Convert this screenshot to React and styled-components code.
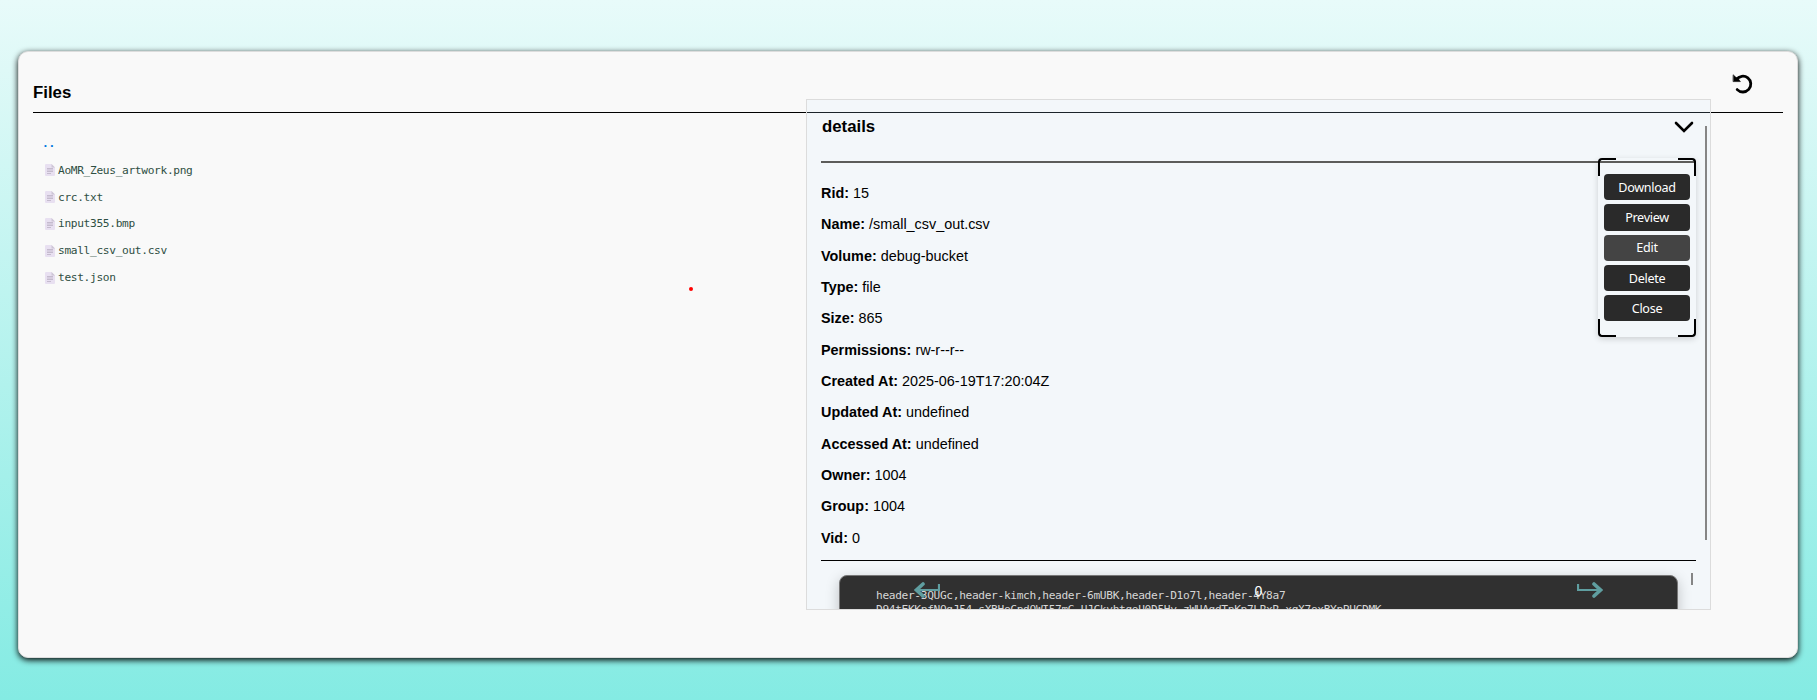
import React from "react";
import styled, { createGlobalStyle } from "styled-components";

const Global = createGlobalStyle`
  * { box-sizing: border-box; }
  body { margin: 0; overflow: hidden; }
`;

const mono = `"DejaVu Sans Mono", monospace`;

const Page = styled.main`
  height: 700px;
  padding: 51px 19px 42px 18px;
  background: linear-gradient(180deg, #e8fbfa 0%, #def9f7 10%, #84ebe3 100%);
  font-family: "Liberation Sans", Arial, sans-serif;
  color: #000;
`;

const Card = styled.section`
  position: relative;
  height: 607px;
  padding: 0 14px;
  border: 1px solid #ddd;
  border-radius: 10px;
  background: #f9f9f9;
  box-shadow: 0 2px 6px #000;
`;

const Header = styled.header`
  display: flex;
  justify-content: space-between;
  height: 61px;
  border-bottom: 1px solid #000;
`;

const Title = styled.h1`
  margin: 31px 0 0;
  font-size: 16.8px;
  line-height: 20px;
`;

const Refresh = styled.svg`
  width: 22px;
  height: 22px;
  margin: 21px 29px 0 0;
`;

const FileList = styled.ul`
  margin: 0;
  padding: 18px 0 0 12px;
  list-style: none;
  font: 11.2px ${mono};
  letter-spacing: -0.33px;
`;

const FileRow = styled.li`
  display: flex;
  align-items: center;
  height: 26.8px;
  color: #2f4f43;
  gap: 3px;
`;

const Parent = styled(FileRow)`
  height: 24px;
  margin: 0 0 2px -3px;
  color: #0078e0;
  font-weight: bold;
`;

const Panel = styled.aside`
  position: absolute;
  left: 787px;
  top: 47px;
  width: 905px;
  height: 511px;
  padding: 0 14px;
  overflow: hidden;
  border: 1px solid #dcdcdc;
  background: #f3f7fa;
`;

const BackRule = styled.i`
  display: block;
  height: 1px;
  margin: 12px -14px 0;
  background: #1b242a;
`;

const PanelHead = styled.div`
  display: flex;
  justify-content: space-between;
  height: 50px;
  border-bottom: 2px solid #5c5c5a;
`;

const PanelTitle = styled.h2`
  margin: 4px 0 0 1px;
  font-size: 16.8px;
  line-height: 20px;
`;

const Chevron = styled.svg`
  width: 20px;
  height: 12px;
  margin: 8px 2px 0 0;
`;

const Details = styled.div`
  height: 398px;
  padding-top: 15px;
  border-bottom: 1px solid #000;
`;

const Field = styled.p`
  margin: 0;
  height: 31.33px;
  font-size: 14.4px;
  line-height: 31px;
`;

const Preview = styled.pre`
  height: 100px;
  margin: 14px 18px 0;
  padding: 13px 36px;
  border: 1px solid #777;
  border-radius: 8px;
  background: #303030;
  box-shadow: 0 4px 14px rgba(0, 0, 0, 0.22);
  color: #d6d6d6;
  font: 11.2px/14px ${mono};
  letter-spacing: -0.34px;
`;

const Pager = styled.nav`
  position: absolute;
  left: 107px;
  right: 107px;
  top: 482px;
  display: flex;
  justify-content: space-between;
  color: #fff;
  font-size: 14px;
`;

const PageNumber = styled.span`
  padding-top: 1px;
`;

const Arrow = styled.svg`
  width: 26px;
  height: 16px;
`;

const Scroll = styled.i`
  position: absolute;
  right: ${(p) => p.$right}px;
  top: ${(p) => p.$top}px;
  width: 2px;
  height: ${(p) => p.$height}px;
  background: #858585;
`;

const Menu = styled.div`
  position: absolute;
  right: 14px;
  top: 58px;
  width: 98px;
  height: 179px;
  display: flex;
  flex-direction: column;
  gap: 4px;
  padding: 16px 6px;
  border-radius: 4px;
  box-shadow: 0 2px 6px rgba(0, 0, 0, 0.16);
`;

const Corner = styled.i`
  position: absolute;
  ${(p) => p.$v}: 0;
  ${(p) => p.$h}: 0;
  width: 18px;
  height: 18px;
  border: 0 solid #000;
  border-${(p) => p.$v}-width: 2px;
  border-${(p) => p.$h}-width: 2px;
  border-${(p) => p.$v}-${(p) => p.$h}-radius: 4px;
`;

const MenuButton = styled.button`
  height: 26.3px;
  flex: none;
  padding: 0;
  border: 0;
  border-radius: 4px;
  background: ${(p) => (p.$active ? "#444" : "#2a2a2a")};
  color: #fff;
  font: 12.6px "Noto Sans", sans-serif;
  letter-spacing: -0.3px;
`;

const Dot = styled.i`
  position: absolute;
  left: 670px;
  top: 235px;
  width: 4px;
  height: 4px;
  border-radius: 50%;
  background: #f00;
`;

const FileIcon = () => (
  <svg width="10" height="12" viewBox="0 0 10 12">
    <path d="M1 0H6.5L10 3.5V11Q10 12 9 12H1Q0 12 0 11V1Q0 0 1 0Z" fill="#e8e0f1" />
    <path d="M6.5 0V3.5H10Z" fill="#cdc5d6" />
    <path d="M2 4.5H8M2 6H8M2 7.5H8M2 9.5H6" stroke="#c5bbce" />
  </svg>
);

const files = ["AoMR_Zeus_artwork.png", "crc.txt", "input355.bmp", "small_csv_out.csv", "test.json"];
const fields = [
  ["Rid", "15"],
  ["Name", "/small_csv_out.csv"],
  ["Volume", "debug-bucket"],
  ["Type", "file"],
  ["Size", "865"],
  ["Permissions", "rw-r--r--"],
  ["Created At", "2025-06-19T17:20:04Z"],
  ["Updated At", "undefined"],
  ["Accessed At", "undefined"],
  ["Owner", "1004"],
  ["Group", "1004"],
  ["Vid", "0"],
];
const csv = `header-3QUGc,header-kimch,header-6mUBK,header-D1o7l,header-4Y8a7
D94tEKKpfNOgJ54,sXBHeCpdQWI57mG,UJCkvhtgoU0D5Hy,zWUAgdTpKp7LRxR,xgX7oxBYpPUGDMK`;

export default function App() {
  return (
    <Page>
      <Global />
      <Card>
        <Header>
          <Title>Files</Title>
          <Refresh viewBox="0 0 22 22" fill="none" stroke="#000" strokeWidth="2.8" strokeLinecap="round">
            <path d="M4.4 6.6A7.9 7.9 0 1 1 5.2 16.6" />
            <path d="M1.4 2L3.9 4.3L5.8 5.2L8.4 8.6H1.4Z" fill="#000" strokeWidth="0.6" />
          </Refresh>
        </Header>
        <FileList>
          <Parent>..</Parent>
          {files.map((f) => (
            <FileRow key={f}><FileIcon />{f}</FileRow>
          ))}
        </FileList>
        <Dot />
        <Panel>
          <BackRule />
          <PanelHead>
            <PanelTitle>details</PanelTitle>
            <Chevron viewBox="0 0 20 12" fill="none" stroke="#000" strokeWidth="2.6" strokeLinecap="round">
              <path d="M2 2L10 10L18 2" />
            </Chevron>
          </PanelHead>
          <Details>
            {fields.map(([k, v]) => (
              <Field key={k}><b>{k}:</b> {v}</Field>
            ))}
          </Details>
          <Preview>{csv}</Preview>
          <Pager>
            <Arrow viewBox="0 0 26 16" fill="none" stroke="#5f9ea0" strokeWidth="2.2">
              <path d="M25 2V8H3" />
              <path d="M9 2L2.5 8L9 14" strokeWidth="3.6" strokeLinecap="round" />
            </Arrow>
            <PageNumber>0</PageNumber>
            <Arrow viewBox="0 0 26 16" fill="none" stroke="#5f9ea0" strokeWidth="2.2">
              <path d="M1 2V8H23" />
              <path d="M17 2L23.5 8L17 14" strokeWidth="3.6" strokeLinecap="round" />
            </Arrow>
          </Pager>
          <Scroll $right={3} $top={26} $height={414} />
          <Scroll $right={17} $top={473} $height={12} />
          <Menu>
            <Corner $v="top" $h="left" />
            <Corner $v="top" $h="right" />
            <Corner $v="bottom" $h="left" />
            <Corner $v="bottom" $h="right" />
            {["Download", "Preview", "Edit", "Delete", "Close"].map((b) => (
              <MenuButton key={b} $active={b === "Edit"}>{b}</MenuButton>
            ))}
          </Menu>
        </Panel>
      </Card>
    </Page>
  );
}
